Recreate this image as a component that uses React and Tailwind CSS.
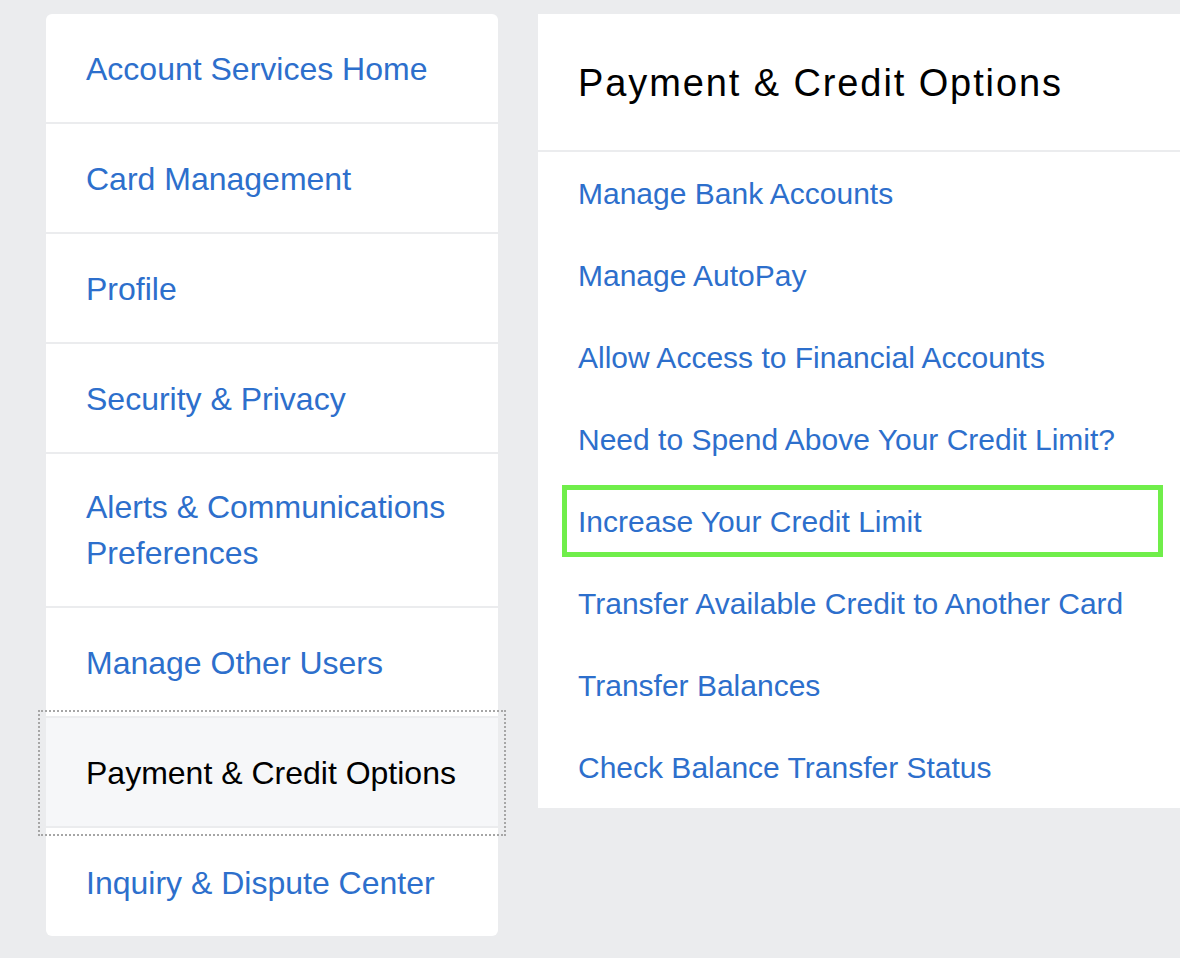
const menu = [
  { label: 'Account Services Home' },
  { label: 'Card Management' },
  { label: 'Profile' },
  { label: 'Security & Privacy' },
  { label: 'Alerts & Communications Preferences', tall: true },
  { label: 'Manage Other Users' },
  { label: 'Payment & Credit Options', active: true },
  { label: 'Inquiry & Dispute Center' },
];

const links = [
  'Manage Bank Accounts',
  'Manage AutoPay',
  'Allow Access to Financial Accounts',
  'Need to Spend Above Your Credit Limit?',
  'Increase Your Credit Limit',
  'Transfer Available Credit to Another Card',
  'Transfer Balances',
  'Check Balance Transfer Status',
];

const font = { fontFamily: '"Liberation Sans", Arial, sans-serif' };

export default function App() {
  return (
    <div className="min-h-[958px] w-full overflow-hidden bg-[#ebecee]" style={font}>
      <div className="flex items-start gap-[40px] pl-[46px] pt-[14px]">
        <ul className="w-[452px] shrink-0 rounded-md bg-white">
          {menu.map((item, i) => (
            <li
              key={item.label}
              className={
                (i < menu.length - 1 ? 'border-b-2 border-[#ebecee] ' : '') +
                (item.active
                  ? 'bg-[#f6f7f9] outline-2 outline-dotted outline-[#a6a6a6] outline-offset-[6px] '
                  : '')
              }
            >
              <a
                href="#"
                className={
                  'flex items-center px-[40px] text-[32px] leading-[46px] ' +
                  (item.tall ? 'py-[30px] pr-[30px] ' : 'h-[108px] pt-[2px] ') +
                  (item.active ? 'text-black' : 'text-[#2d6fcc]')
                }
              >
                {item.label}
              </a>
            </li>
          ))}
        </ul>

        <section className="flex-1 bg-white">
          <div className="flex h-[138px] items-center border-b-2 border-[#ebecee] px-[40px] pt-[2px]">
            <h1 className="text-[38px] text-black tracking-[1.9px]">Payment &amp; Credit Options</h1>
          </div>
          <ul>
            {links.map((l, i) => (
              <li key={l} className="relative flex h-[82px] items-center px-[40px] pt-[1px]">
                <a href="#" className="text-[30px] text-[#2d6fcc]">
                  {l}
                </a>
                {i === 4 && (
                  <span className="pointer-events-none absolute left-[24px] top-[5px] h-[72px] w-[601px] border-[5px] border-[#70ee4a]" />
                )}
              </li>
            ))}
          </ul>
        </section>
      </div>
    </div>
  );
}
